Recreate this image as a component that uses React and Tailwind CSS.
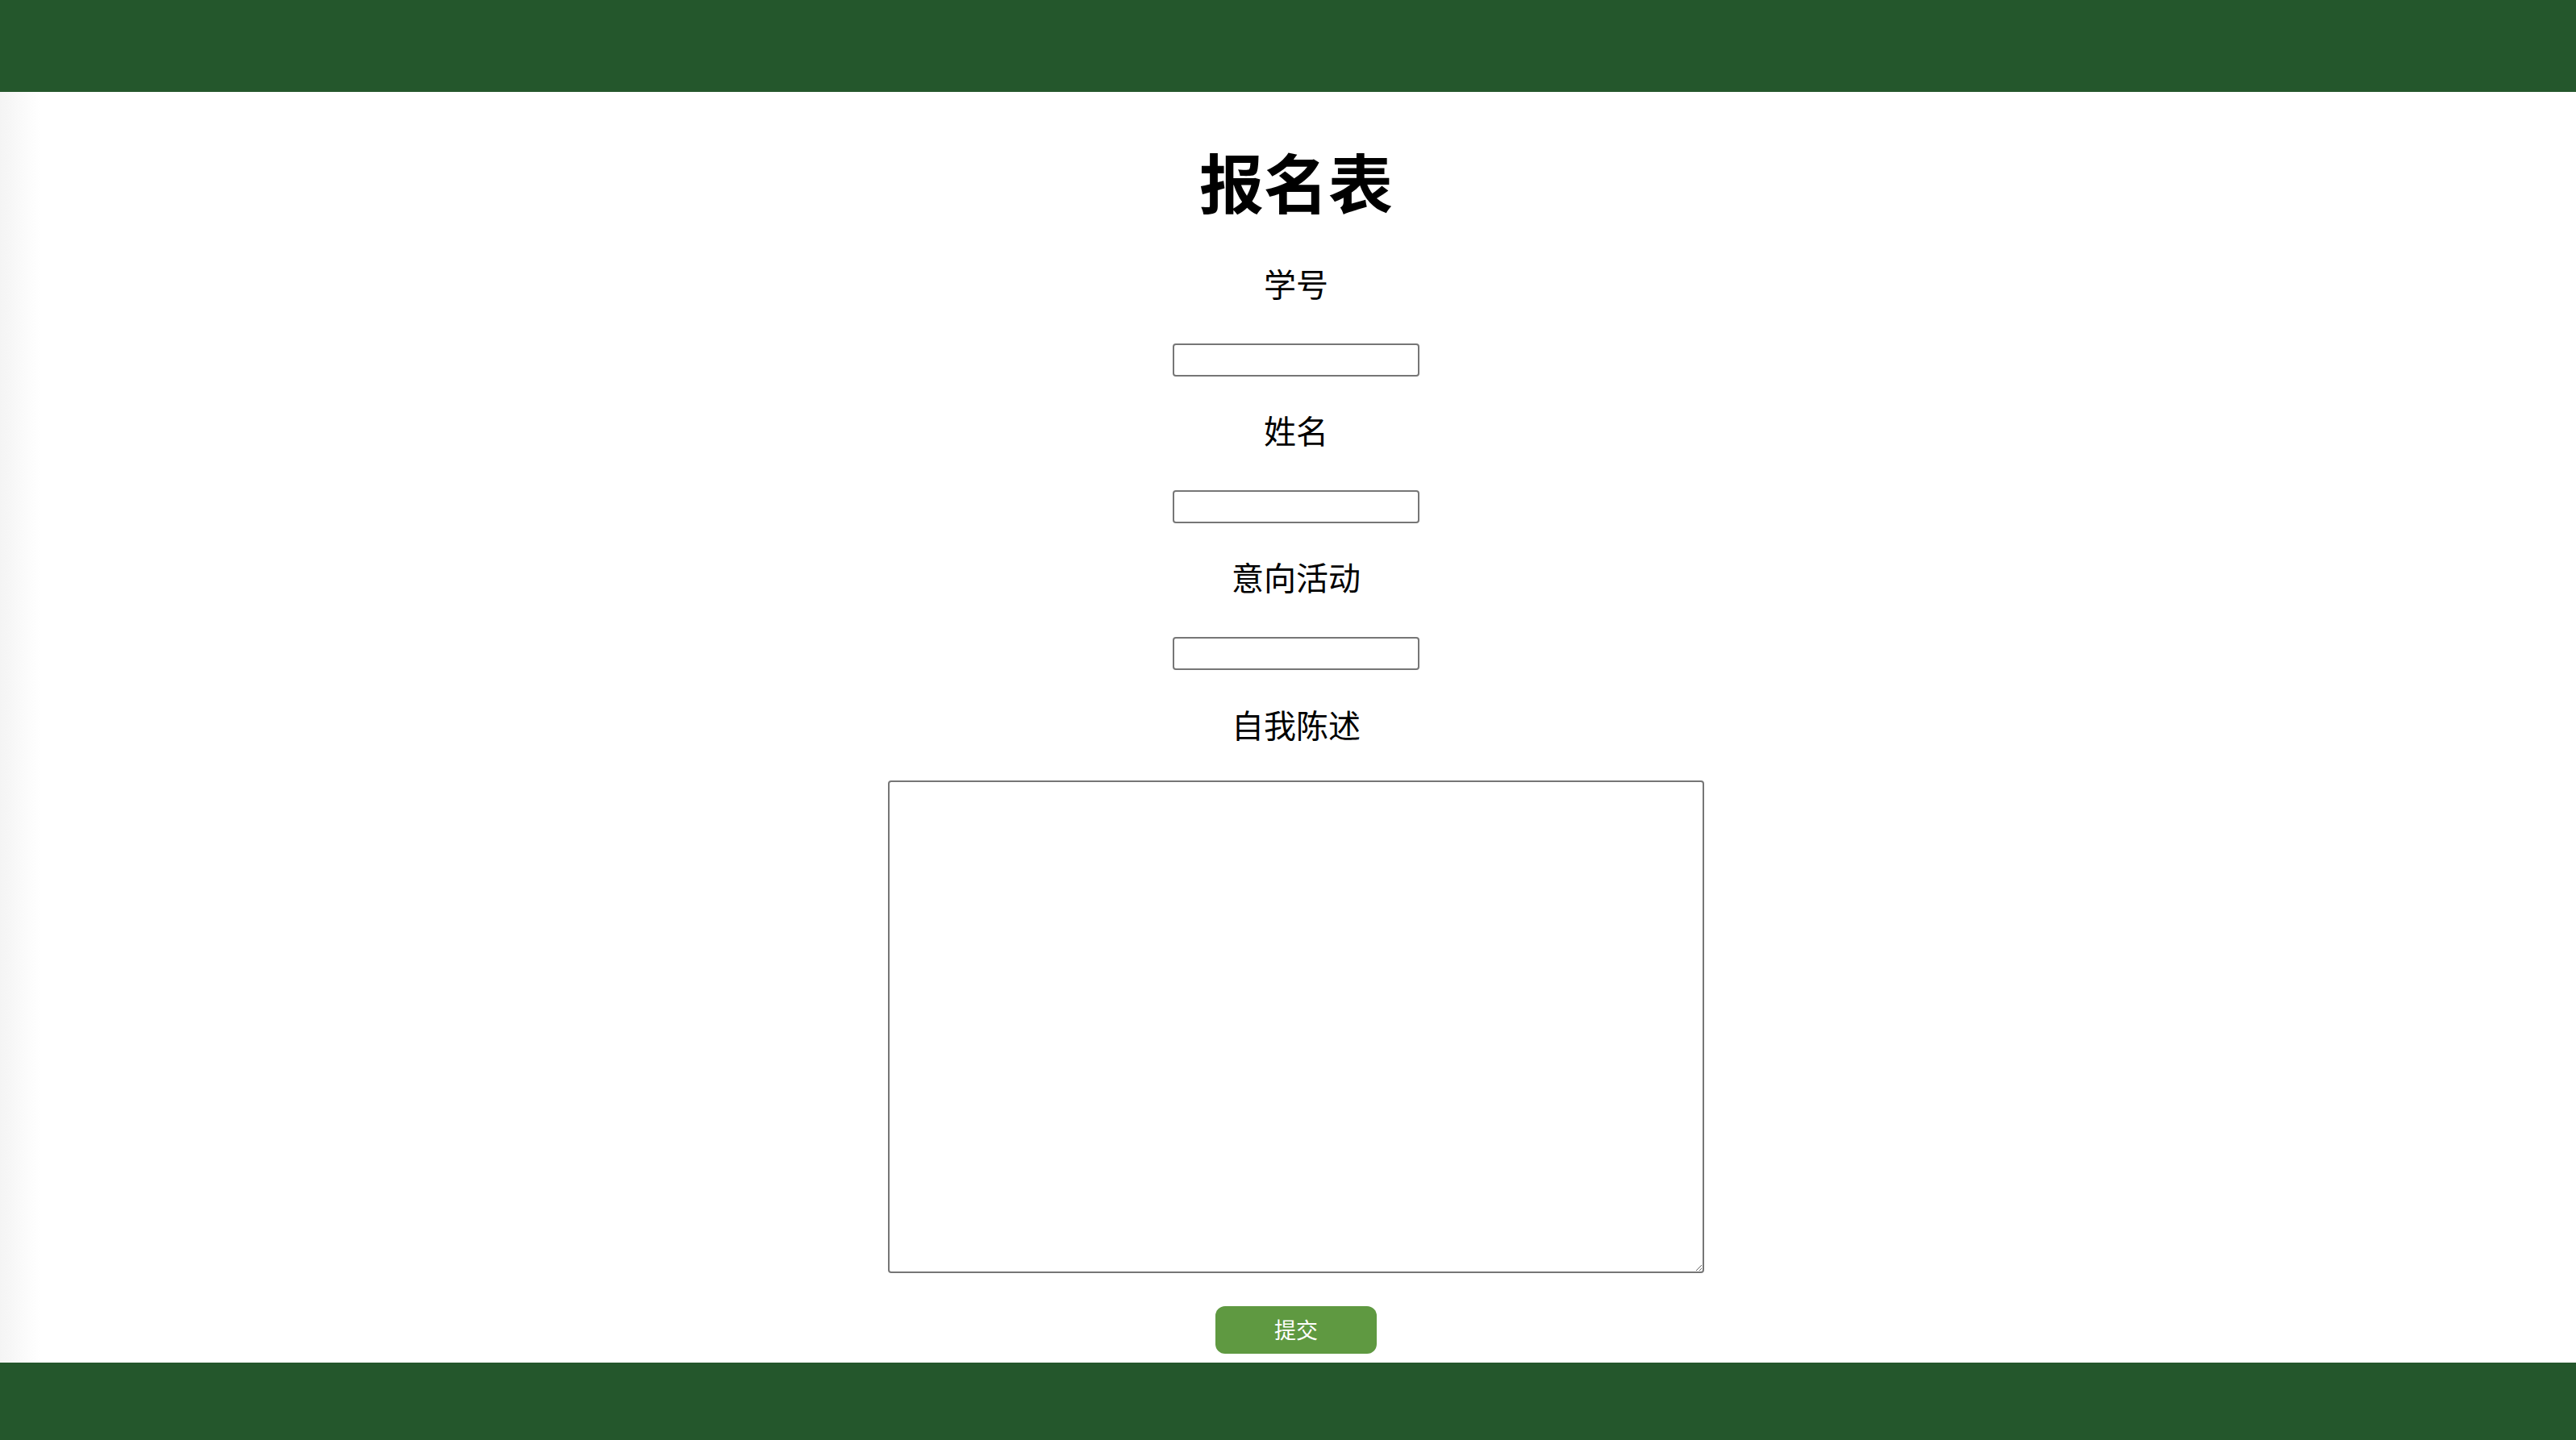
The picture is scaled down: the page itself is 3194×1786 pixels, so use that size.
const font = { fontFamily: '"Noto Sans CJK SC", "Noto Sans", sans-serif' };

function Field({ label, first }) {
  return (
    <>
      <label className={`${first ? "mt-[50px]" : "mt-[38px]"} h-[56px] leading-[56px] text-[40px] text-black`}>
        {label}
      </label>
      <input
        type="text"
        className="mt-[47px] w-[306px] h-[41px] border-2 border-[#767676] rounded-[4px] bg-white"
      />
    </>
  );
}

export default function App() {
  return (
    <div className="h-screen overflow-hidden flex flex-col bg-white" style={font}>
      <header className="h-[114px] shrink-0 bg-[#24572c]" />
      <main className="flex flex-col items-center shrink-0 pl-[20px] bg-[linear-gradient(to_right,#f4f4f4,#ffffff_50px)]">
        <h1 className="mt-[59px] h-[100px] leading-[100px] text-[80px] font-bold text-black">报名表</h1>
        <Field label="学号" first />
        <Field label="姓名" />
        <Field label="意向活动" />
        <label className="mt-[39px] h-[56px] leading-[56px] text-[40px] text-black">自我陈述</label>
        <textarea className="mt-[42px] w-[1012px] h-[611px] border-2 border-[#767676] rounded-[4px] bg-white" />
        <button className="mt-[41px] mb-[11px] w-[200px] h-[59px] rounded-[12px] bg-[#5f9941] text-white text-[27px]">
          提交
        </button>
      </main>
      <footer className="flex-1 bg-[#24572c]" />
    </div>
  );
}
